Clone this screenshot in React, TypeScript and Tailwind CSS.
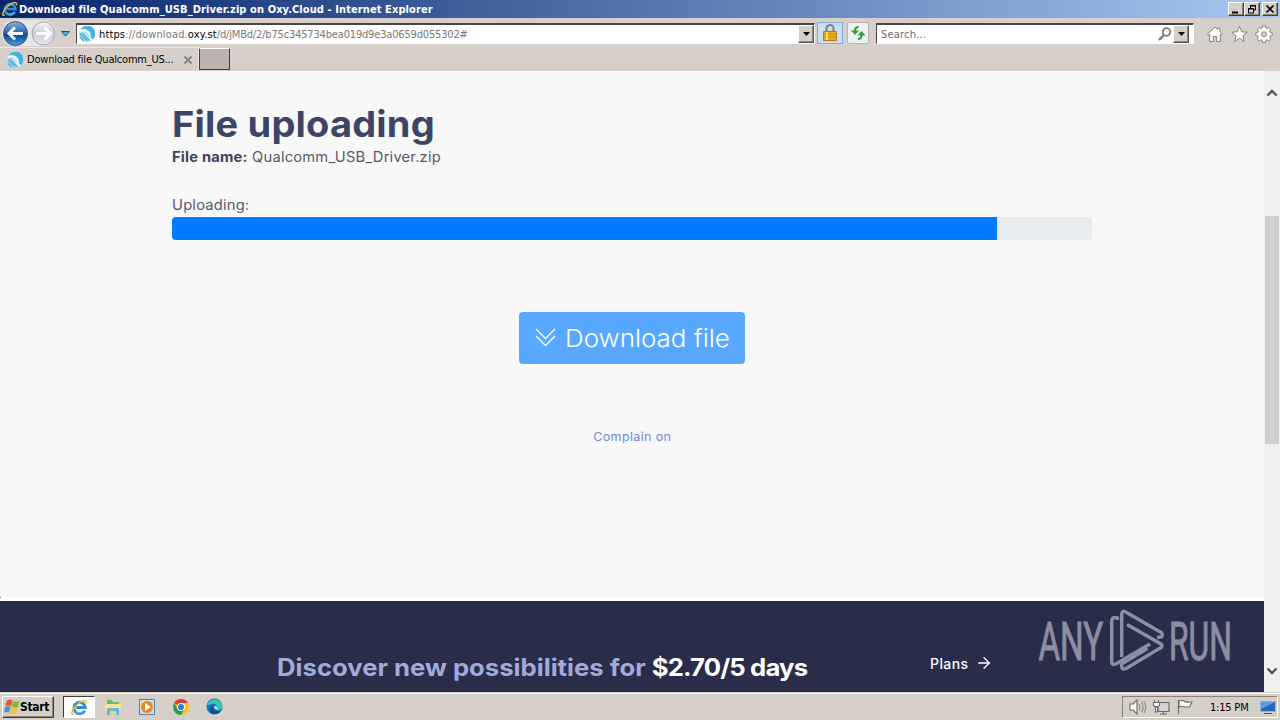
import React from 'react';
import { ArrowRight } from 'lucide-react';

const PROGRESS = 89.7;

const IeLogo: React.FC<{ size: number }> = ({ size }) => (
  <svg width={size} height={size} viewBox="0 0 18 18" fill="none" className="shrink-0">
    <path d="M14.5 12.2a6 6 0 1 1 .6-3.2H5.6" stroke="#2b8fd6" strokeWidth="3" />
    <path d="M14 12a5.6 5.6 0 0 1-8.500 1.500" stroke="#7cc9f3" strokeWidth="1" />
    <path d="M3 15.500C-.5 18 .3 12 5.500 6.800 10.500 1.800 17.500-.5 16.300 4.800" stroke="#eec12f" strokeWidth="1.600" />
  </svg>
);

const OxyIcon: React.FC = () => (
  <svg width="16" height="16" viewBox="0 0 16 16" className="shrink-0">
    <circle cx="8" cy="8" r="8" fill="#b5e2f5" />
    <path d="M1.500 3.500A8 8 0 1 1 14 13.300L11.500 11q1-4-2-6.500-4-3-8-1" fill="#45b1e3" />
    <path d="M1 5q5-2 8 1 2.500 2.500 2 5.500l2 2.500" fill="none" stroke="#fff" strokeWidth="1.500" />
    <path d="M.7 7.500L8 15M3 7l7 7.500M.8 11l4 4" stroke="#48afdd" strokeWidth="1.300" />
  </svg>
);

const DropButton: React.FC = () => (
  <div className="flex h-[18px] w-4 shrink-0 items-center justify-center border border-t-white border-r-[#55504c] border-b-[#55504c] border-l-white bg-[#d4d0c8] shadow-[inset_-1px_-1px_#908a84]">
    <svg width="7" height="4" viewBox="0 0 7 4"><path d="M0 0h7L3.500 4z" fill="#000" /></svg>
  </div>
);

const WindowButton: React.FC<{ children: React.ReactNode }> = ({ children }) => (
  <div className="flex h-3.5 w-4 items-center justify-center border border-t-white border-r-[#403c3a] border-b-[#403c3a] border-l-white bg-[#d4d0c8] shadow-[inset_-1px_-1px_#8b8580]">
    <svg width="12" height="11" viewBox="0 0 12 11" fill="none" stroke="#000">{children}</svg>
  </div>
);

const TitleBar: React.FC = () => (
  <div className="flex h-[18px] items-center bg-linear-to-r from-[#0a246a] to-[#a6caf0] pr-0.5 pl-0.5">
    <IeLogo size={16} />
    <span className="ml-px pt-0.5 text-[11px] leading-4 font-bold tracking-[0.09px] whitespace-pre text-white">
      Download file Qualcomm_USB_Driver.zip on Oxy.Cloud - Internet Explorer
    </span>
    <div className="ml-auto flex">
      <WindowButton><path d="M2 8.500h6" strokeWidth="2" /></WindowButton>
      <WindowButton>
        <path d="M4.500 4V1.500h5v4.500H8M4 2h6M2.500 4.500h5v4.500h-5zM2 5h6" />
      </WindowButton>
      <div className="ml-0.5">
        <WindowButton><path d="M2.500 1.500l7 7M9.500 1.500l-7 7" strokeWidth="1.700" /></WindowButton>
      </div>
    </div>
  </div>
);

const NavButtons: React.FC = () => (
  <svg width="76" height="29" viewBox="0 0 76 29" className="shrink-0">
    <defs>
      <linearGradient id="back" x1="0" y1="0" x2="0" y2="1">
        <stop offset="0" stopColor="#8cb2dd" />
        <stop offset="0.450" stopColor="#2e68b3" />
        <stop offset="0.550" stopColor="#0d3f91" />
        <stop offset="1" stopColor="#46a7e6" />
      </linearGradient>
      <linearGradient id="forward" x1="0" y1="0" x2="0" y2="1">
        <stop offset="0" stopColor="#f5f6f8" />
        <stop offset="0.500" stopColor="#c7cdd5" />
        <stop offset="1" stopColor="#e6ebf0" />
      </linearGradient>
    </defs>
    <path d="M15 2h28a13 13 0 0 1 0 26H15a13 13 0 0 1 0-26" fill="#e8e6e3" />
    <circle cx="15.500" cy="15.500" r="12" fill="url(#back)" stroke="#31547f" />
    <circle cx="43.500" cy="15.500" r="11.500" fill="url(#forward)" stroke="#a4a8ad" />
    <path d="M23 15.500H9M15 9.500l-6 6 6 6" stroke="#fff" strokeWidth="3" fill="none" />
    <path d="M36 15.500h14M44.500 9.500l6 6-6 6" stroke="#fff" strokeWidth="3" fill="none" />
    <path d="M61.500 13.500h8l-4 4.500z" fill="#4fb3df" stroke="#24506f" />
  </svg>
);

const AddressBar: React.FC = () => (
  <div className="flex h-[29px] items-center bg-[#d6cfca]">
    <NavButtons />
    <div className="mt-px flex h-[21px] w-[739px] items-center border border-t-2 border-t-[#4b4440] border-r-white border-b-white border-l-[#4b4440] bg-white pl-0.5">
      <OxyIcon />
      <span className="ml-1 pt-0.5 text-[11px] leading-4 tracking-[0.14px] whitespace-pre text-[#787878]">
        <span className="text-black">https</span>://download.<span className="text-black">oxy.st</span>
        <span className="tracking-[-0.17px]">/d/jMBd/2/b75c345734bea019d9e3a0659d055302#</span>
      </span>
      <div className="ml-auto"><DropButton /></div>
    </div>
    <div className="ml-0.5 flex h-[22px] w-[26px] items-center justify-center border border-[#83abd8] bg-[#c9dff5]">
      <svg width="14" height="17" viewBox="0 0 14 17">
        <path d="M3.500 8V4.500a3.500 3.500 0 0 1 7 0V8" fill="none" stroke="#8c8063" strokeWidth="2" />
        <path d="M.5 7.500h13v9H.5z" fill="#e8ae22" stroke="#b57b14" />
        <path d="M1 10h12M1 13h12" stroke="#c58b19" />
        <path d="M4 8v8" stroke="#f9dc72" strokeWidth="2" />
      </svg>
    </div>
    <div className="ml-1 flex h-[22px] w-[22px] items-center justify-center rounded-xs border border-[#b5b5b5] bg-[#edf2f0]">
      <svg width="16" height="16" viewBox="0 0 16 16" fill="none" stroke="#2f9c3a" strokeWidth="2">
        <path d="M8.500 2Q5 2 5 6" />
        <path d="M1 5.500h8L5 10z" fill="#2f9c3a" stroke="none" />
        <path d="M8 14q3.500 0 3.500-4" />
        <path d="M7.500 10.500h8L11.500 6z" fill="#2f9c3a" stroke="none" />
      </svg>
    </div>
    <div className="mt-px ml-[7px] flex h-[21px] w-[318px] items-center border border-t-2 border-t-[#4b4440] border-r-white border-b-white border-l-[#4b4440] bg-white pl-1">
      <span className="pt-0.5 text-[11px] leading-4 tracking-[0.2px] text-[#6b6b6b]">Search...</span>
      <svg width="14" height="14" viewBox="0 0 14 14" fill="none" stroke="#777" className="ml-auto">
        <circle cx="8.500" cy="5" r="3.800" strokeWidth="1.700" />
        <path d="M6 8l-5 5" strokeWidth="2.400" />
      </svg>
      <div className="mr-1 ml-px"><DropButton /></div>
    </div>
    <svg width="70" height="20" viewBox="0 0 70 20" fill="#fff" stroke="#85807c" className="mt-[3px] ml-3">
      <path d="M1.500 10L9 3l2.500 2.300V4h2.300v3.500l2.700 2.500-1 1.200-1.200-.7v7h-3.600v-5H7.300v5H3.700v-7l-1.200.7z" />
      <path d="M33.500 2.500l2.200 5.300 5.600.4-4.300 3.600 1.300 5.700-4.800-3.100-4.800 3.100 1.300-5.700-4.300-3.600 5.600-.4z" />
      <path d="M56.600 3h2.800l.4 2 1.300.5 1.700-1.100 2 2-1.100 1.700.5 1.300 2 .4v2.800l-2 .4-.5 1.300 1.100 1.700-2 2-1.700-1.100-1.300.5-.4 2h-2.800l-.4-2-1.300-.5-1.700 1.100-2-2 1.100-1.700-.5-1.300-2-.4V9.800l2-.4.5-1.300-1.100-1.700 2-2 1.700 1.100 1.300-.5z" transform="translate(0 -1)" />
      <circle cx="58" cy="10.200" r="2.500" fill="#d6cfca" />
    </svg>
  </div>
);

const TabRow: React.FC = () => (
  <div className="flex h-6 items-start bg-[#d6cfca]">
    <div className="flex h-6 w-[199px] items-center border-t border-r border-t-[#eeeae6] border-r-[#eeeae6] pr-1 pl-[7px]">
      <OxyIcon />
      <span className="ml-1 pt-0.5 text-[11px] tracking-[-0.2px] whitespace-nowrap text-black">Download file Qualcomm_US...</span>
      <svg width="8" height="8" viewBox="0 0 8 8" className="mr-0.5 ml-auto" stroke="#8a8582" strokeWidth="2">
        <path d="M.5.5l7 7M7.500.5l-7 7" />
      </svg>
    </div>
    <div className="mt-px h-[22px] w-[31px] border border-t-white border-r-[#3f3a38] border-b-[#3f3a38] border-l-[#3f3a38] bg-[#beb2ae]"></div>
  </div>
);

const Watermark: React.FC = () => (
  <svg width="196" height="66" viewBox="1037 607 196 66" className="absolute top-1.5 left-[1037px]" fill="none">
    <g fill="#8b8fa2" stroke="#8b8fa2" strokeWidth="1" fontFamily="Roboto" fontSize="53">
      <text transform="translate(1038.500 660) scale(.66 1)" textLength="98" lengthAdjust="spacingAndGlyphs">ANY</text>
      <text transform="translate(1169 660) scale(.6 1)" textLength="105" lengthAdjust="spacingAndGlyphs">RUN</text>
    </g>
    <g stroke="#8b8fa2" strokeWidth="3.500" strokeLinejoin="round">
      <path d="M1117.500 620v-2q-5.500-2-5.800 3v41q.3 4 5 1.500L1150 644" />
      <path d="M1121.700 657V614q.3-4 4-2l35.500 20.500q2.500 2.500 0 4.500l-4 .5" />
      <path d="M1127 624.500l34 19.500q2 1.500 0 3.500l-35 21q-4 2-4.500-2.500v-2l26-15.500" />
    </g>
  </svg>
);

const Page: React.FC = () => (
  <div className="relative flex min-w-0 flex-1 flex-col bg-white font-[Inter,sans-serif] text-[#3c4468]">
    <main className="flex h-[526px] flex-col bg-[#f8f8f8] pt-[31px] pr-[172px] pl-[172px]">
      <h1 className="h-11 origin-left scale-x-[1.055] text-[36px] leading-[44px] font-bold tracking-[0.2px] whitespace-nowrap text-[#3c4468]">File uploading</h1>
      <p className="h-[21px] origin-left scale-x-[1.05] text-[14px] leading-[21px] tracking-[0.2px] text-[#55586a]">
        <b className="text-[#3c4258]">File name:</b> Qualcomm_USB_Driver.zip
      </p>
      <p className="mt-[27px] h-[21px] origin-left scale-x-[1.05] text-[14px] leading-[21px] tracking-[0.2px] text-[#55586a]">Uploading:</p>
      <div className="mt-0.5 h-[23px] w-[920px] overflow-hidden rounded bg-[#e9ecef]">
        <div className="h-full bg-[#007bff]" style={{ width: `${PROGRESS}%` }}></div>
      </div>
      <button className="mt-[72px] flex h-[52px] w-[226px] items-center self-center rounded bg-[#58a8ff] pl-4 text-2xl font-light text-white">
        <svg width="21" height="20" viewBox="0 0 21 20" fill="none" stroke="#fff" strokeWidth="1.400">
          <path d="M1 1l9.500 9.500L20 1M1 8l9.500 9.500L20 8" />
        </svg>
        <span className="ml-[9px] origin-left scale-x-[1.08] pt-0.5 whitespace-nowrap">Download file</span>
      </button>
      <a className="mt-16 scale-x-[1.05] self-center text-[12px] leading-[18px] tracking-[0.3px] text-[#7786da]">Complain on</a>
    </main>
    <div className="h-1 bg-white"></div>
    <div className="absolute top-[526px] left-0 h-px w-px bg-[#777]"></div>
    <section className="relative flex h-[91px] bg-[#292d4a] pt-[51px] pl-[277px] whitespace-nowrap">
      <p className="w-[653px] origin-left scale-x-[1.07] text-2xl leading-8 font-bold text-[#a0abdc]">
        Discover new possibilities for <span className="tracking-[-0.8px] text-white">$2.70/5 days</span>
      </p>
      <a className="flex h-[22px] items-center text-[14px] font-medium tracking-[0.4px] text-white">
        Plans <ArrowRight className="ml-[7px] h-[18px] w-[18px]" strokeWidth={1.700} />
      </a>
      <Watermark />
    </section>
  </div>
);

const Scrollbar: React.FC = () => (
  <div className="flex w-4 shrink-0 flex-col items-center bg-[#f0f0f0] pt-[18px]">
    <svg width="12" height="8" viewBox="0 0 12 8" fill="none" stroke="#555" strokeWidth="2.400" className="shrink-0">
      <path d="M1.500 6.500L6 2l4.500 4.500" />
    </svg>
    <div className="mt-[119px] h-[228px] w-3.5 shrink-0 bg-[#cdcdcd]"></div>
    <svg width="12" height="8" viewBox="0 0 12 8" fill="none" stroke="#555" strokeWidth="2.400" className="mt-auto mb-[17px] shrink-0">
      <path d="M1.500 1.500L6 6l4.500-4.500" />
    </svg>
  </div>
);

const TaskIcons: React.FC = () => (
  <div className="flex items-center">
    <svg width="18" height="18" viewBox="0 0 18 18" className="ml-[9px]">
      <path d="M1 3h6l1 2h8v10H1z" fill="#efd57a" />
      <path d="M3 2h5l1 2h6v3H3z" fill="#73b76d" />
      <path d="M1 6h16v6H1z" fill="#f6e49d" />
      <path d="M3 10h12v7h-3v-4H6v4H3z" fill="#69b8df" />
    </svg>
    <svg width="16" height="16" viewBox="0 0 16 16" className="ml-[17px]">
      <path d="M.5.5h15v15H.5z" fill="#c7def0" stroke="#4d82b5" />
      <circle cx="8" cy="8" r="6" fill="#ee8617" />
      <path d="M6 4l6 4-6 4z" fill="#fff" />
    </svg>
    <svg width="16" height="16" viewBox="0 0 16 16" className="ml-[18px]">
      <circle cx="8" cy="8" r="8" fill="#f5c51c" />
      <path d="M8 8L1.100 4A8 8 0 0 1 15 4H8z" fill="#df3b30" />
      <path d="M1.100 4A8 8 0 0 0 8 16l3.500-6L8 8 4.500 10z" fill="#259d50" />
      <circle cx="8" cy="8" r="4" fill="#fff" />
      <circle cx="8" cy="8" r="3.100" fill="#3879e8" />
    </svg>
    <svg width="17" height="17" viewBox="0 0 17 17" className="ml-[17px]">
      <circle cx="8.500" cy="8.500" r="8" fill="#1473c5" />
      <path d="M1 7a8 8 0 0 1 15.500 1c.3 3-3.500 4-6 3 2-3-1-6-4.500-5S1 7 1 7" fill="#38c5b1" />
      <path d="M7 8c-1 4 3 6.500 8 5-3 4-10 4-11 0-.7-3 1-5 3-5" fill="#124b93" />
      <path d="M8 8.500q1.500-1 3 .5-1 2 3.500 2.500-6 1-6.500-3" fill="#d6e8ee" />
    </svg>
  </div>
);

const Taskbar: React.FC = () => (
  <footer className="flex h-7 items-center border-t border-[#d4d0c8] bg-[#d6cfc8] pr-0.5 pl-0.5 shadow-[inset_0_1px_#fff]">
    <div className="mt-px flex h-[22px] w-[52px] items-center border border-t-white border-r-[#403c3a] border-b-[#403c3a] border-l-white pl-px shadow-[inset_-1px_-1px_#8b8580]">
      <svg width="16" height="16" viewBox="0 0 16 16" className="shrink-0">
        <path d="M3 1.500q3-2 5.500 0L7 7.500q-2.500-2-5.500-.2z" fill="#e4552d" />
        <path d="M9 2q3 1.500 6.500 0L14 8q-3 1.200-6.500-.3z" fill="#7eb83c" />
        <path d="M1 8.200q3-1.700 5.500 0L5 14q-2.500-2-5-.3z" fill="#4b8ed8" />
        <path d="M7.200 8.500q3 1.500 6.500 0L12 14.500q-3 1-6.300-.5z" fill="#f2c232" />
      </svg>
      <span className="text-[12px] font-bold tracking-[-0.3px] text-black">Start</span>
    </div>
    <div className="mt-px ml-[9px] flex h-[22px] w-8 items-center justify-center border border-t-[#403c3a] border-r-white border-b-white border-l-[#403c3a] bg-[#fdfdfc]">
      <IeLogo size={17} />
    </div>
    <TaskIcons />
    <div className="mt-px ml-auto flex h-[22px] w-[156px] items-center border border-t-[#87817c] border-r-white border-b-white border-l-[#87817c] pl-1.5">
      <svg width="66" height="18" viewBox="0 0 66 18" fill="#f7f7f7" stroke="#6d6966" strokeWidth="1.100">
        <path d="M1 6h3l4-4v14l-4-4H1z" />
        <path d="M10 6q2 3 0 6M12.500 4q3.500 5 0 10M15 3q3.500 6 0 12" fill="none" stroke="#8f8a86" />
        <path d="M29 4.500h11v9H29zM31 16h7M34.500 14v2" fill="#d2d2d2" />
        <path d="M25.500 2v3M29.500 2v3M24.500 4.500h6v3l-1.500 1h-3l-1.500-1zM26.500 9h2v5h-2z" />
        <path d="M49.500 2v14M50 3q3-1.500 5 0t5 1h3l-2.500 5h-5q-3-1.500-5.500 0z" />
      </svg>
      <span className="ml-[15px] pt-0.5 text-[11px] tracking-[-0.2px] whitespace-nowrap text-black">1:15 PM</span>
      <svg width="16" height="15" viewBox="0 0 16 15" className="mr-px ml-auto shrink-0">
        <path d="M.5 1.500h15v10H.5z" fill="#2767bd" stroke="#8bb2dd" />
        <path d="M1 2h14L1 9z" fill="#5c9ce0" />
        <path d="M4 13h8v1H4z" fill="#47535f" />
      </svg>
    </div>
  </footer>
);

const App: React.FC = () => {
  return (
    <div className="flex h-[720px] w-[1280px] flex-col overflow-hidden bg-[#d6cfca] font-['DejaVu_Sans_Condensed','DejaVu_Sans',sans-serif]">
      <TitleBar />
      <AddressBar />
      <TabRow />
      <div className="flex h-[621px]">
        <Page />
        <Scrollbar />
      </div>
      <Taskbar />
    </div>
  );
};

export default App;
